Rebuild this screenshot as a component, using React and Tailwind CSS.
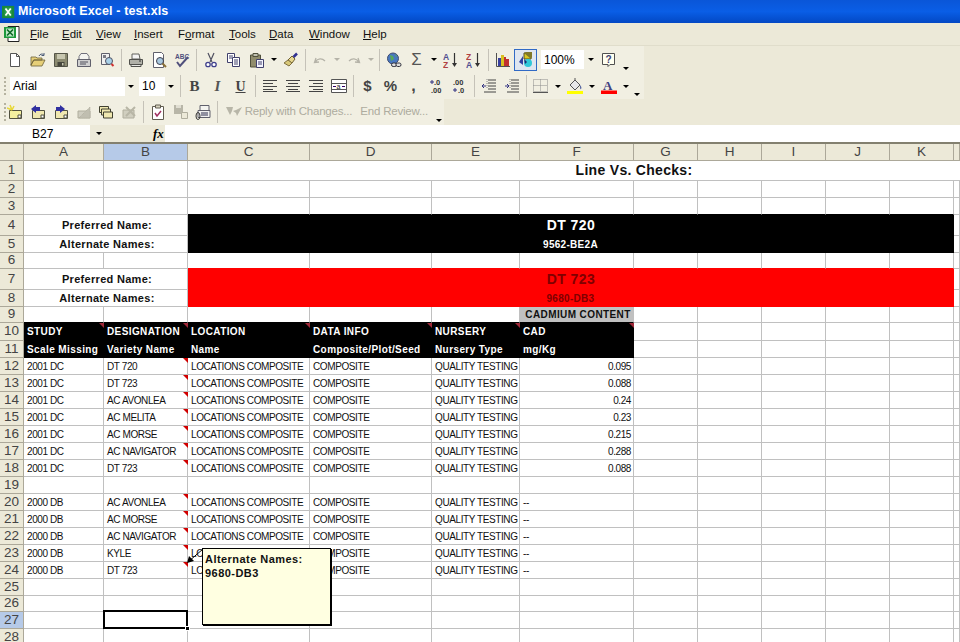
import { Fragment } from 'react'

const ui = "font-['Liberation_Sans',Arial,sans-serif]"

function Ic({ children }) {
  return <svg viewBox="0 0 16 16" className="w-4 h-4">{children}</svg>
}

// toolbar slots
function B({ children, on }) {
  return (
    <div className={`w-[23px] h-[22px] flex items-center justify-center ${on ? 'bg-[#dfe6f0] border border-[#316ac5]' : ''}`}>
      {children}
    </div>
  )
}
const Sep = () => (
  <div className="w-[6px] h-[22px] flex justify-center"><div className="w-px h-full bg-[#c5c2b8]" /></div>
)
const Arrow = ({ dim }) => (
  <div className="w-[11px] flex justify-center">
    <div className={`w-0 h-0 border-x-[3px] border-t-[3px] border-x-transparent ${dim ? 'border-t-[#b5b3a8]' : 'border-t-black'}`} />
  </div>
)
const Overflow = () => (
  <div className="w-[11px] h-full flex justify-center items-end pb-[3px]">
    <div className="w-0 h-0 border-x-[3px] border-t-[3px] border-x-transparent border-t-black" />
  </div>
)
const Grip = () => (
  <div className="absolute left-[4px] top-[4px] bottom-[4px] w-[2px] border-l-2 border-dotted border-[#b5b2a0]" />
)

const NewIcon = () => <Ic><path d="M3.5 1.5h6l3 3v10h-9z" fill="#fff" stroke="#555" /><path d="M9.5 1.5v3h3" fill="none" stroke="#555" /></Ic>
const OpenIcon = () => <Ic><path d="M1 13V5h5l1 1h5v2H4l-3 5 2.5-5H15l-3 6H1z" fill="#e6cf78" stroke="#6b6038" strokeWidth=".8" /><path d="M9 4c1-2 3-2.5 4.5-1.5M14 1v2.500h-2.500" fill="none" stroke="#4a5a78" /></Ic>
const SaveIcon = () => <Ic><path d="M1.500 1.500h13v13h-13z" fill="#8b8a70" stroke="#555548" /><path d="M4 2h8v5H4z" fill="#c8c7b0" /><path d="M4.500 10h7v4.500h-7z" fill="#46463c" /><path d="M9 11h1.500v2.500H9z" fill="#c8c7b0" /></Ic>
const MailIcon = () => <Ic><path d="M5 1.500h6l2 3v3H3v-3z" fill="#f4f4f0" stroke="#70707c" /><path d="M1.500 7.500h13v7h-13z" fill="#d0d0d0" stroke="#60606c" /><path d="M4 10h8M4 12h6" stroke="#50505c" /></Ic>
const SearchDocIcon = () => <Ic><path d="M2.500 1.500h8v11h-8z" fill="#f0f0f0" stroke="#60606c" /><path d="M4 3h3v3H4z" fill="#7c7c84" /><circle cx="10" cy="9" r="3.500" fill="#a8d0e8" stroke="#505060" /><path d="M12.500 12l2 2" stroke="#d03030" strokeWidth="2" /></Ic>
const PrintIcon = () => <Ic><path d="M4 2h7l1 5H4z" fill="#f4f4f4" stroke="#60605c" /><path d="M1.500 7.500h13v5h-13z" fill="#b0b0a8" stroke="#50504c" /><path d="M3 12.500h10v2H3z" fill="#e8e8e4" stroke="#50504c" /><path d="M11 9h2" stroke="#333" /></Ic>
const PreviewIcon = () => <Ic><path d="M2.500 .5h8l2 2v13h-10z" fill="#fff" stroke="#60606c" /><circle cx="9" cy="9" r="3.500" fill="#a8c8e0" stroke="#40404c" /><path d="M11.500 11.500l3.500 3.500" stroke="#8a7038" strokeWidth="2" /></Ic>
const SpellIcon = () => <Ic><text x="1" y="6.500" fontSize="6.500" fontFamily="Liberation Sans" fill="#50507c" fontWeight="bold">ABC</text><path d="M3 10l3 4 8-9" fill="none" stroke="#50507c" strokeWidth="2" /></Ic>
const CutIcon = () => <Ic><path d="M5 1l4 9M11 1l-4 9" stroke="#505060" strokeWidth="1.200" /><circle cx="5" cy="12.500" r="2.200" fill="#fff" stroke="#40408c" strokeWidth="1.300" /><circle cx="11" cy="12.500" r="2.200" fill="#fff" stroke="#40408c" strokeWidth="1.300" /></Ic>
const CopyIcon = () => <Ic><path d="M1.500 1.500h7v9h-7z" fill="#fff" stroke="#40406c" /><path d="M6.500 5.500h7v9h-7z" fill="#fff" stroke="#40406c" /><path d="M3 4h4M3 6h3M8 8h4M8 10h4M8 12h4" stroke="#40406c" /></Ic>
const PasteIcon = () => <Ic><path d="M1.500 3h10v12h-10z" fill="#908c6c" stroke="#50503c" /><path d="M4 1.500h5v3H4z" fill="#c0c0b0" stroke="#50503c" /><path d="M7.500 7.500h7v8h-7z" fill="#f4f4ff" stroke="#40406c" /><path d="M9 10h4M9 12h4" stroke="#40406c" /></Ic>
const BrushIcon = () => <Ic><path d="M9 4l3 3-3 4-4-3z" fill="#e8d890" stroke="#706030" /><path d="M5 8l4 3-3 3-5-3z" fill="#d8c878" stroke="#807040" /><path d="M10.500 5L14 1.500" stroke="#303090" strokeWidth="2.500" /></Ic>
const UndoIcon = () => <Ic><path d="M4 6l-1.500 4.500 4.500-.5M3 10c3-4 7-4 10-1" fill="none" stroke="#b5b3a8" strokeWidth="1.300" /></Ic>
const RedoIcon = () => <Ic><path d="M12 6l1.500 4.500L9 10M13 10C10 6 6 6 3 9" fill="none" stroke="#b5b3a8" strokeWidth="1.300" /></Ic>
const LinkIcon = () => <Ic><circle cx="7" cy="6.500" r="5.500" fill="#4878c0" stroke="#404c70" /><path d="M4 3l3 1 1 3-3 2zM9 2l2 2-1 1z" fill="#58a858" /><rect x="5.500" y="11" width="5" height="3.500" rx="1.700" fill="#e0e0e0" stroke="#30303c" /><rect x="10" y="11" width="5" height="3.500" rx="1.700" fill="#e0e0e0" stroke="#30303c" /></Ic>
const SortIcon = ({ top, bottom, topC, botC }) => (
  <Ic>
    <text x="0" y="7.500" fontSize="8.500" fontWeight="bold" fontFamily="Liberation Sans" fill={topC}>{top}</text>
    <text x="0" y="15.500" fontSize="8.500" fontWeight="bold" fontFamily="Liberation Sans" fill={botC}>{bottom}</text>
    <path d="M11.500 1v12" stroke="#333" strokeWidth="1.200" /><path d="M9 11h5l-2.500 4z" fill="#333" />
  </Ic>
)
const ChartIcon = () => <Ic><path d="M1.500 1v13.500H15" fill="none" stroke="#505050" /><path d="M3 6h3v8H3z" fill="#3840a0" /><path d="M6 3h3v11H6z" fill="#d8c020" /><path d="M9 5h2v9H9z" fill="#c03030" /><path d="M11 7h3v7h-3z" fill="#c03030" /></Ic>
const DrawIcon = () => <Ic><path d="M6 1h7v6H6z" fill="#d8c820" stroke="#504c20" /><path d="M6 1l2-1h6v5l-1 2z" fill="#807828" /><path d="M5 4L1 10l4 3z" fill="#3040a0" /><circle cx="10" cy="11" r="4" fill="#30c8d8" /><path d="M6 7l3 3-2 2z" fill="#20286c" /></Ic>
const HelpIcon = () => <Ic><path d="M1.500 1.500h12v11H9l-2 2v-2H1.500z" fill="#fffff0" stroke="#505050" /><text x="4.500" y="11" fontSize="10" fontWeight="bold" fontFamily="Liberation Sans" fill="#404070">?</text></Ic>
const AlignIcon = ({ rows }) => <Ic><path d={rows} stroke="#444" fill="none" /></Ic>
const MergeIcon = () => <Ic><path d="M.5 1.500h15v13H.5z" fill="#fff" stroke="#555" /><path d="M.5 5.500h15M.5 11.500h15" stroke="#555" /><path d="M2 8.500h3M14 8.500h-3" stroke="#306" /><text x="5.500" y="10.500" fontSize="7" fontFamily="Liberation Sans" fill="#222">a</text></Ic>
const NumIcon = ({ a, b }) => (
  <Ic>
    <path d="M1 4h4M3 2v4" stroke="#303080" strokeWidth={a[0] === '+' ? 1 : 0} />
    <text x={a[0] === '+' ? 5 : 1} y="7" fontSize="7.500" fontFamily="Liberation Sans" fontWeight="bold" fill="#333">{a.slice(1)}</text>
    <path d="M1 12h4M3 10v4" stroke="#303080" strokeWidth={b[0] === '+' ? 1 : 0} />
    <text x={b[0] === '+' ? 6 : 2} y="15" fontSize="7.500" fontFamily="Liberation Sans" fontWeight="bold" fill="#333">{b.slice(1)}</text>
  </Ic>
)
const IndentIcon = ({ flip }) => (
  <Ic>
    <path d="M7 2h8M7 5h8M7 8h8M7 11h8M3 14h12" stroke="#444" />
    <path d={flip ? 'M1 8h4M3 6l2 2-2 2' : 'M1 8h4M3 6L1 8l2 2'} stroke="#303080" fill="none" />
    <path d="M6 1v9" stroke="#888" strokeDasharray="1 1" />
  </Ic>
)
const BorderIcon = () => <Ic><path d="M.5 1.500h14v12H.5zM.5 7.500h14M7.500 1.500v12" fill="none" stroke="#8a8a8a" strokeDasharray="1 1" /><path d="M0 14.500h15" stroke="#555" /></Ic>
const FillIcon = () => <Ic><path d="M3 7l5-5 5 5-5 5z" fill="#e8e8e8" stroke="#555" /><path d="M8 2V0" stroke="#555" /><path d="M13 7c1 1 2 3 1 4s-1-2-1-4z" fill="#5060a0" /><path d="M0 13h16v3H0z" fill="#ffff00" /></Ic>
const FontColorIcon = () => <Ic><text x="2" y="12" fontSize="13" fontWeight="bold" fontFamily="Liberation Serif" fill="#404080">A</text><path d="M0 12.500h16V16H0z" fill="#ff0000" /></Ic>
const NoteIcon = ({ kind }) => (
  <Ic>
    <path d="M2.500 6.500h12v8h-12z" fill={kind === 'new' ? '#f4f0a0' : '#f0e8b0'} stroke="#505040" />
    <path d="M11 11h3v3h-3z" fill="#fff" stroke="#505040" />
    {kind === 'new' && <path d="M3 1l2 5M0 4l5 2M7 2L5 6" stroke="#e8d838" strokeWidth="1.500" />}
    {kind === 'prev' && <path d="M1 5l5-4v2h4v4H6v2z" fill="#3030a0" />}
    {kind === 'next' && <path d="M12 5L7 1v2H3v4h4v2z" fill="#3030a0" />}
  </Ic>
)
const GreyNote = () => <Ic><path d="M2 7h12v7H2z" fill="#cfcdc0" stroke="#b0ae9e" /><path d="M3 14L14 3v11z" fill="#c0beb0" stroke="#b0ae9e" strokeDasharray="1 1" /></Ic>
const ShowNotes = () => <Ic><path d="M1.500 2.500h9v6h-9z" fill="#f0e8b0" stroke="#404030" /><path d="M3.500 5h9v6h-9z" fill="#f0e8b0" stroke="#404030" /><path d="M5.500 8h9v6h-9z" fill="#f0e8b0" stroke="#404030" /></Ic>
const GreyDel = () => <Ic><path d="M2 6h11v8H2z" fill="#d0cebf" stroke="#b0ae9e" /><path d="M5 3l9 9M14 3l-9 9" stroke="#b8b6a6" strokeWidth="2" /></Ic>
const TrackIcon = () => <Ic><path d="M2.500 2.500h11v13h-11z" fill="#fff" stroke="#605c50" /><path d="M5.500 1h5v3h-5z" fill="#d8d4c0" stroke="#605c50" /><path d="M5 9l2 3 4-5" fill="none" stroke="#a03060" strokeWidth="1.500" /></Ic>
const GreySave = () => <Ic><path d="M1 1h9v9H1z" fill="#b8b6a8" /><path d="M3 1h5v3H3z" fill="#e0ded2" /><path d="M8.500 8.500h6v6h-6z" fill="#ece9d8" stroke="#b0ae9e" /></Ic>
const AttachIcon = () => <Ic><path d="M5 1.500h9v6H5z" fill="#f4f4f0" stroke="#60606c" /><path d="M3 6.500h12v7H3z" fill="#f0f0f0" stroke="#60606c" /><path d="M6 9h7M6 11h7" stroke="#303050" /><ellipse cx="3" cy="12" rx="2" ry="3.500" fill="none" stroke="#303030" /></Ic>
const ReplyIcon = () => <Ic><path d="M0 3h7l-1 4-2 4zM16 3l-6 3-3 1 3 2 1 3z" fill="#b8b6a8" /></Ic>

function Toolbars() {
  return (
    <>
      <div className="h-[27px] w-[644px] bg-[#f1efe2] flex items-center pl-[3px] relative">
        <B><NewIcon /></B><B><OpenIcon /></B><B><SaveIcon /></B><B><MailIcon /></B><B><SearchDocIcon /></B>
        <Sep />
        <B><PrintIcon /></B><B><PreviewIcon /></B><B><SpellIcon /></B>
        <Sep />
        <B><CutIcon /></B><B><CopyIcon /></B><B><PasteIcon /></B><Arrow /><B><BrushIcon /></B>
        <Sep />
        <B><UndoIcon /></B><Arrow dim /><B><RedoIcon /></B><Arrow dim />
        <Sep />
        <B><LinkIcon /></B>
        <B><span className="text-[17px] leading-none text-[#555]">Σ</span></B><Arrow />
        <B><SortIcon top="A" bottom="Z" topC="#505090" botC="#b04040" /></B>
        <B><SortIcon top="Z" bottom="A" topC="#b04040" botC="#505090" /></B>
        <Sep />
        <B><ChartIcon /></B>
        <B on><DrawIcon /></B>
        <div className="ml-[4px] w-[56px] h-[19px] bg-white flex items-center pl-[3px] text-[12px] text-black relative">
          100%
          <div className="absolute right-0 top-0 bottom-0 w-[13px] bg-[#f1efe2] flex items-center justify-center">
            <div className="w-0 h-0 border-x-[3px] border-t-[3px] border-x-transparent border-t-black" />
          </div>
        </div>
        <B><HelpIcon /></B>
        <Overflow />
      </div>

      <div className="h-[26px] w-[644px] bg-[#f1efe2] flex items-center pl-[10px] relative">
        <Grip />
        <div className="w-[126px] h-[19px] bg-white flex items-center pl-[3px] text-[12px] text-black relative">
          Arial
          <div className="absolute right-0 top-0 bottom-0 w-[11px] bg-[#f1efe2] flex items-center justify-center">
            <div className="w-0 h-0 border-x-[3px] border-t-[3px] border-x-transparent border-t-black" />
          </div>
        </div>
        <div className="ml-[3px] w-[38px] h-[19px] bg-white flex items-center pl-[3px] text-[12px] text-black relative">
          10
          <div className="absolute right-0 top-0 bottom-0 w-[12px] bg-[#f1efe2] flex items-center justify-center">
            <div className="w-0 h-0 border-x-[3px] border-t-[3px] border-x-transparent border-t-black" />
          </div>
        </div>
        <Sep />
        <B><span className="font-['Liberation_Serif',serif] font-bold text-[15px] text-[#444]">B</span></B>
        <B><span className="font-['Liberation_Serif',serif] font-bold italic text-[15px] text-[#555]">I</span></B>
        <B><span className="font-['Liberation_Serif',serif] font-bold underline text-[14px] text-[#444]">U</span></B>
        <Sep />
        <B><AlignIcon rows="M1 2.500h14M1 5.500h10M1 8.500h14M1 11.500h10M1 13.500h14" /></B>
        <B><AlignIcon rows="M1 2.500h14M3 5.500h10M1 8.500h14M3 11.500h10M1 13.500h14" /></B>
        <B><AlignIcon rows="M1 2.500h14M5 5.500h10M1 8.500h14M5 11.500h10M1 13.500h14" /></B>
        <B><MergeIcon /></B>
        <Sep />
        <B><span className="font-bold text-[15px] text-[#444]">$</span></B>
        <B><span className="font-bold text-[15px] text-[#444]">%</span></B>
        <B><span className="font-bold text-[16px] leading-none text-[#444]">,</span></B>
        <B><NumIcon a="+.0" b=" .00" /></B>
        <B><NumIcon a=" .00" b="+.0" /></B>
        <Sep />
        <B><IndentIcon /></B>
        <B><IndentIcon flip /></B>
        <Sep />
        <B><BorderIcon /></B><Arrow />
        <B><FillIcon /></B><Arrow />
        <B><FontColorIcon /></B><Arrow />
        <Overflow />
      </div>

      <div className="h-[26px] w-[444px] bg-[#f1efe2] flex items-center pl-[4px] relative">
        <Grip />
        <B><NoteIcon kind="new" /></B><B><NoteIcon kind="prev" /></B><B><NoteIcon kind="next" /></B>
        <B><GreyNote /></B><B><ShowNotes /></B><B><GreyDel /></B>
        <Sep />
        <B><TrackIcon /></B><B><GreySave /></B><B><AttachIcon /></B>
        <Sep />
        <div className="ml-[5px] flex items-center gap-[3px] whitespace-nowrap text-[11.500px] tracking-[-0.2px] text-[#aeac9f]">
          <ReplyIcon />
          <span>Reply with Changes...</span>
          <span className="ml-[5px]">End Review...</span>
        </div>
        <div className="ml-[5px] h-full"><Overflow /></div>
      </div>
    </>
  )
}

const colNames = ['A', 'B', 'C', 'D', 'E', 'F', 'G', 'H', 'I', 'J', 'K', '']

const Head = ({ n, on }) => (
  <div className={`flex items-center justify-center border-r border-b border-[#aca899] text-[13.500px] text-[#444] ${on ? 'bg-[#b6cae8]' : 'bg-[#ece9d8]'}`}>{n}</div>
)

// comment marker in the cell corner
const Tri = ({ dark }) => (
  <div className={`absolute right-[-1px] top-0 w-0 h-0 border-l-[5px] border-t-[5px] border-l-transparent ${dark ? 'border-t-[#a02838]' : 'border-t-[#d00000]'}`} />
)

function C({ children, className = '', tri, dark }) {
  return (
    <div className={`relative flex items-center min-w-0 whitespace-nowrap border-r border-b border-[#c0c0c0] pl-[3px] ${className}`}>
      {children}
      {tri && <Tri dark={dark} />}
    </div>
  )
}

const Blank = ({ count, className }) => Array.from({ length: count }, (_, i) => <C key={i} className={className} />)

const data1 = [
  ['DT 720', '0.095'], ['DT 723', '0.088'], ['AC AVONLEA', '0.24'], ['AC MELITA', '0.23'],
  ['AC MORSE', '0.215'], ['AC NAVIGATOR', '0.288'], ['DT 723', '0.088'],
]
const data2 = ['AC AVONLEA', 'AC MORSE', 'AC NAVIGATOR', 'KYLE', 'DT 723']

const small = 'text-[10px] tracking-[-0.4px] text-[#111]'
const bold = 'font-bold text-[10px] tracking-[0.4px] text-[#111]'
const label = 'font-bold text-[11px] tracking-[0.3px] text-[#111]'
const white = 'font-bold text-[10px] tracking-[0.4px] text-white'
const blackCell = 'bg-black border-black'

function DataRow({ n, study, name, value, dash }) {
  return (
    <>
      <Head n={n} />
      <C className={small}>{study}</C>
      <C className={small} tri>{name}</C>
      <C className={small}>LOCATIONS COMPOSITE</C>
      <C className={small}>COMPOSITE</C>
      <C className={small}>QUALITY TESTING</C>
      {dash
        ? <C className={small}>--</C>
        : <C className={`${small} justify-end pr-[2px]`}>{value}</C>}
      <Blank count={6} />
    </>
  )
}

function EmptyRow({ n, on }) {
  return <><Head n={n} on={on} /><Blank count={12} /></>
}

function Sheet() {
  return (
    <div className="relative flex-1 overflow-hidden">
      <div className="grid grid-cols-[24px_80px_84px_122px_122px_88px_114px_64px_64px_64px_64px_64px_6px] grid-rows-[17px_20px_17px_17px_21px_17px_16px_21px_17px_16px_18px_17px_repeat(14,17px)_16px_17px_17px] bg-white">
        <div className="bg-[#ece9d8] border-r border-b border-[#aca899]" />
        {colNames.map(c => (
          <div
            key={c || 'L'}
            className={`flex items-center justify-center border-r border-b border-[#aca899] text-[13.500px] text-[#444] ${c === 'B' ? 'bg-[#b6cae8]' : 'bg-[#ece9d8]'}`}
          >
            {c}
          </div>
        ))}

        <Head n={1} />
        <C /><C />
        <div className="col-span-10 flex items-center justify-center pl-[120px] border-b border-[#c0c0c0] font-bold text-[14px] tracking-[0.3px] text-[#111]">Line Vs. Checks:</div>

        <EmptyRow n={2} />
        <Head n={3} />
        <C /><C />
        <Blank count={9} className="border-b-black" />
        <C />

        <Head n={4} />
        <C className={`col-span-2 ${label} justify-center`}>Preferred Name:</C>
        <C className="col-span-9 bg-black border-black justify-center pl-0 pr-[2px] font-bold text-[14px] tracking-[0.4px] text-white">DT 720</C>
        <C />
        <Head n={5} />
        <C className={`col-span-2 ${label} justify-center`}>Alternate Names:</C>
        <C className="col-span-9 bg-black border-black justify-center pl-0 pr-[3px] font-bold text-[10px] tracking-[0.3px] text-white">9562-BE2A</C>
        <C />

        <Head n={6} />
        <C /><C />
        <Blank count={9} className="border-b-[#ff0000]" />
        <C />

        <Head n={7} />
        <C className={`col-span-2 ${label} justify-center`}>Preferred Name:</C>
        <C className="col-span-9 bg-[#ff0000] border-[#ff0000] justify-center pl-0 pr-[2px] font-bold text-[14px] tracking-[0.4px] text-[#800000]">DT 723</C>
        <C />
        <Head n={8} />
        <C className={`col-span-2 ${label} justify-center`}>Alternate Names:</C>
        <C className="col-span-9 bg-[#ff0000] border-[#ff0000] justify-center pl-0 pr-[3px] font-bold text-[10px] tracking-[0.3px] text-[#800000]">9680-DB3</C>
        <C />

        <Head n={9} />
        <Blank count={5} className="border-b-black" />
        <C className={`bg-[#c0c0c0] border-[#c0c0c0] border-b-black justify-center pl-0 ${bold}`}>CADMIUM CONTENT</C>
        <Blank count={6} />

        <Head n={10} />
        {['STUDY', 'DESIGNATION', 'LOCATION', 'DATA INFO', 'NURSERY', 'CAD'].map(t => (
          <C key={t} className={`${blackCell} ${white}`} tri dark>{t}</C>
        ))}
        <Blank count={6} />

        <Head n={11} />
        {['Scale Missing', 'Variety Name', 'Name', 'Composite/Plot/Seed', 'Nursery Type', 'mg/Kg'].map(t => (
          <C key={t} className={`${blackCell} ${white}`}>{t}</C>
        ))}
        <Blank count={6} />

        {data1.map(([name, value], i) => (
          <Fragment key={i}><DataRow n={12 + i} study="2001 DC" name={name} value={value} /></Fragment>
        ))}
        <EmptyRow n={19} />
        {data2.map((name, i) => (
          <Fragment key={i}><DataRow n={20 + i} study="2000 DB" name={name} dash /></Fragment>
        ))}
        <EmptyRow n={25} />
        <EmptyRow n={26} />
        <EmptyRow n={27} on />
        <EmptyRow n={28} />
      </div>

      {/* active cell B27 */}
      <div className="absolute left-[103px] top-[466px] w-[85px] h-[19px] border-2 border-black">
        <div className="absolute right-[-4px] bottom-[-4px] w-[5px] h-[5px] bg-black border border-white" />
      </div>

      {/* comment on B24 */}
      <svg className="absolute left-[184px] top-[404px] w-[20px] h-[18px]" viewBox="0 0 20 18">
        <path d="M19 1L4 14" stroke="#000" />
        <path d="M3 15l2-7 5 5z" fill="#000" />
      </svg>
      <div className="absolute left-[202px] top-[404px] w-[129px] h-[77px] bg-[#ffffe1] border border-black shadow-[1px_1px_0_#000] pl-[2px] pt-[3px] font-bold text-[11px] leading-[14px] tracking-[0.45px] text-[#111]">
        <div>Alternate Names:</div>
        <div>9680-DB3</div>
      </div>
    </div>
  )
}

const menus = [
  ['', 'F', 'ile', 'w-[32px]'], ['', 'E', 'dit', 'w-[34px]'], ['', 'V', 'iew', 'w-[38px]'], ['', 'I', 'nsert', 'w-[44px]'],
  ['F', 'o', 'rmat', 'w-[51px]'], ['', 'T', 'ools', 'w-[40px]'], ['', 'D', 'ata', 'w-[40px]'], ['', 'W', 'indow', 'w-[54px]'], ['', 'H', 'elp', 'w-[32px]'],
]

export default function App() {
  return (
    <div className={`w-[960px] h-[642px] overflow-hidden flex flex-col bg-[#ece9d8] ${ui}`}>
      <div className="h-[23px] shrink-0 flex items-center bg-gradient-to-b from-[#0a56d8] via-[#0a5ee6] to-[#0348c4] pl-[2px]">
        <svg viewBox="0 0 16 16" className="w-[14px] h-[14px]"><path d="M0 1h14v14H0z" fill="#1a8a3a" /><path d="M3 3h8v10H3z" fill="#2fa050" /><path d="M4 4l6 8M10 4l-6 8" stroke="#fff" strokeWidth="2" /></svg>
        <span className="ml-[2px] font-bold text-[12.500px] tracking-[0.15px] text-white">Microsoft Excel - test.xls</span>
      </div>

      <div className="h-[23px] shrink-0 flex items-center border-b border-[#e0ddcb]">
        <svg viewBox="0 0 18 18" className="ml-[3px] w-[18px] h-[18px]">
          <path d="M5 1.500h11v15H5z" fill="#fff" stroke="#222" />
          <path d="M1 2h12v11H1z" fill="#1e9a3c" />
          <path d="M3 3.500h8v8H3z" fill="#bfe8c8" />
          <path d="M4 4.500l6 6M10 4.500l-6 6" stroke="#0c6a24" strokeWidth="1.600" />
        </svg>
        <div className="ml-[9px] pt-[1px] flex text-[11.500px] text-[#111]">
          {menus.map(([pre, key, rest, w]) => (
            <span key={key + rest} className={w}>{pre}<u>{key}</u>{rest}</span>
          ))}
        </div>
      </div>

      <Toolbars />

      <div className="h-[19px] shrink-0 flex items-center border-b-2 border-[#83806f] text-[12px] text-black">
        <div className="w-[90px] h-full bg-white pl-[32px] flex items-center">B27</div>
        <div className="w-[18px] flex justify-center">
          <div className="w-0 h-0 border-x-[3px] border-t-[3px] border-x-transparent border-t-black" />
        </div>
        <div className="w-[57px] pl-[45px] font-['Liberation_Serif',serif] italic font-bold text-[13px]">fx</div>
        <div className="flex-1 h-full bg-white" />
      </div>

      <Sheet />
    </div>
  )
}
